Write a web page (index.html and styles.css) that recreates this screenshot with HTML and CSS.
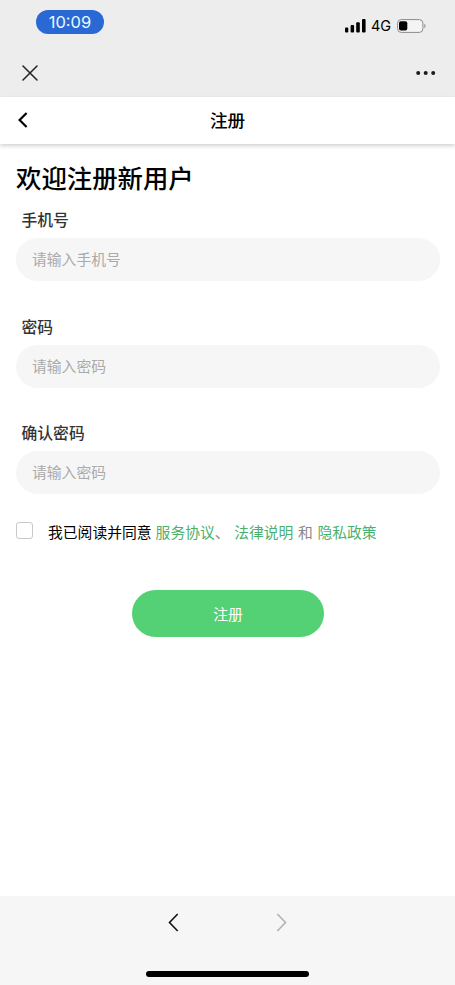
FILE: index.html
```html
<!DOCTYPE html>
<html lang="zh-CN">
<head>
<meta charset="utf-8">
<meta name="viewport" content="width=device-width, initial-scale=1">
<title>注册</title>
<link rel="stylesheet" href="styles.css">
</head>
<body>
<div class="screen">
  <div class="chrome">
    <div class="status">
      <span class="time">10:09</span>
      <div class="signals">
        <svg width="22" height="14" viewBox="0 0 22 14" fill="#000"><rect x="0" y="8.5" width="3.3" height="5" rx="1"/><rect x="5.6" y="6" width="3.5" height="7.5" rx="1"/><rect x="11.2" y="3.2" width="3.6" height="10.3" rx="1"/><rect x="17" y="0" width="3.6" height="13.5" rx="1"/></svg>
        <span class="network">4G</span>
        <svg width="30" height="14" viewBox="0 0 30 14"><rect x=".6" y=".6" width="25.3" height="12.8" rx="3.6" fill="#f4f4f4" stroke="#8b8b8b"/><rect x="2" y="2.2" width="8.3" height="9.4" rx="2" fill="#000"/><path d="M27.3 4.8c1.7.7 1.7 3.7 0 4.4z" fill="#8b8b8b"/></svg>
      </div>
    </div>
    <div class="toolbar">
      <svg width="16" height="16" viewBox="0 0 16 16" fill="none" stroke="#222" stroke-width="1.5" stroke-linecap="round"><path d="M1 1l14 14M15 1L1 15"/></svg>
      <svg width="20" height="6" viewBox="0 0 20 6" fill="#1b1b1b"><circle cx="2.2" cy="3" r="2"/><circle cx="9.7" cy="3" r="2"/><circle cx="17.2" cy="3" r="2"/></svg>
    </div>
  </div>
  <header class="header">
    <svg class="back" width="10" height="16" viewBox="0 0 10 16" fill="none" stroke="#000" stroke-width="2.2"><path d="M8.6 1L1.6 8l7 7"/></svg>
    <h1 class="title">注册</h1>
  </header>
  <main class="main">
    <h2 class="welcome">欢迎注册新用户</h2>
    <form class="form">
      <div class="field"><label class="label" for="phone">手机号</label><input class="input" id="phone" type="tel" placeholder="请输入手机号"></div>
      <div class="field"><label class="label" for="pwd">密码</label><input class="input" id="pwd" type="password" placeholder="请输入密码"></div>
      <div class="field"><label class="label" for="confirm">确认密码</label><input class="input" id="confirm" type="password" placeholder="请输入密码"></div>
      <div class="agree">
        <input class="check" type="checkbox" id="agree">
        <label class="agree-text" for="agree">我已阅读并同意</label>
        <span class="terms"><a class="link">服务协议</a>、 <a class="link">法律说明</a> 和 <a class="link">隐私政策</a></span>
      </div>
      <button class="submit" type="button">注册</button>
    </form>
  </main>
  <footer class="footer">
    <div class="nav">
      <svg width="11" height="19" viewBox="0 0 11 19" fill="none" stroke="#111" stroke-width="1.6"><path d="M9.7 1L1.5 9.5l8.2 8.5"/></svg>
      <svg width="11" height="19" viewBox="0 0 11 19" fill="none" stroke="#b2b2b2" stroke-width="1.6"><path d="M1.3 1l8.2 8.5L1.3 18"/></svg>
    </div>
    <div class="home"></div>
  </footer>
</div>
</body>
</html>
```
FILE: styles.css
```css
* { box-sizing: border-box; }
body { margin: 0; background: #fff; color: #000; font-family: "Noto Sans CJK SC", sans-serif; }
svg { display: block; flex: none; }
.screen { height: 985px; display: flex; flex-direction: column; overflow: hidden; }
.chrome { height: 97px; background: #ededed; }
.status { height: 52px; padding: 10px 28px 0 36px; display: flex; justify-content: space-between; align-items: flex-start; }
.time { width: 68px; height: 24px; border-radius: 12px; background: #2a68d4; color: #e6fbff; font: 16.5px/25px Inter, sans-serif; text-align: center; }
.signals { display: flex; align-items: center; margin-top: 9px; height: 14px; }
.network { font: 14.5px/14px Inter, sans-serif; width: 26px; margin-left: 4px; }
.toolbar { display: flex; justify-content: space-between; align-items: center; height: 42px; padding: 0 19px 0 22px; }
.header { height: 47px; flex: none; display: grid; grid-template-columns: 40px 1fr 40px; align-items: center; padding-bottom: 2px; background: #fff; box-shadow: 0 2px 4px rgba(0,0,0,.18); }
.back { margin-left: 18px; }
.title { margin: 0; font-size: 17.6px; line-height: 26px; font-weight: 500; text-align: center; }
.main { flex: 1; padding: 15px 15px 0 16px; }
.welcome { margin: 0 0 1px; font-size: 25.4px; line-height: 36px; font-weight: 500; }
.field { height: 106.5px; }
.label { display: block; height: 42px; padding: 12px 0 0 5.5px; font-size: 15.8px; line-height: 24px; font-weight: 500; color: #333; }
.input { display: block; width: 100%; height: 43px; border: 0; border-radius: 22px; padding: 0 16px 2px; background: #f6f6f6; font: 14.8px/22px "Noto Sans CJK SC", sans-serif; }
.input::placeholder { color: #aaa; opacity: 1; }
.agree { display: flex; align-items: center; height: 24px; margin-top: 4px; font-size: 14.8px; white-space: nowrap; }
.check { appearance: none; width: 17px; height: 17px; margin: 0 15px 2px 0; border: 1px solid #c8c8c8; border-radius: 3px; background: #fff; }
.agree-text { margin-right: 4px; }
.terms { color: #888; word-spacing: 1.3px; }
.link { color: #4bb06c; }
.submit { display: block; width: 192px; height: 47px; margin: 46px auto 0; padding: 2px 0 0; border: 0; border-radius: 24px; background: #54d175; color: #fff; font: 14.8px/22px "Noto Sans CJK SC", sans-serif; }
.footer { height: 89px; flex: none; background: #f6f6f6; display: flex; flex-direction: column; align-items: center; padding-top: 17px; }
.nav { width: 119px; display: flex; justify-content: space-between; }
.home { width: 163px; height: 6px; margin-top: 39px; border-radius: 3px; background: #000; }
```
